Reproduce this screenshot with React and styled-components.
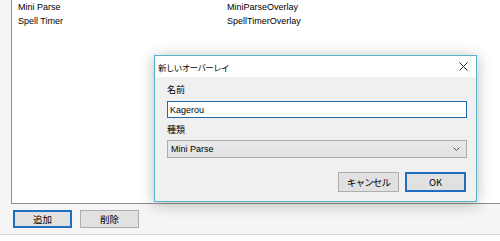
import styled, { createGlobalStyle } from 'styled-components';

const GlobalStyle = createGlobalStyle`
  html, body {
    margin: 0;
    padding: 0;
    background: #ffffff;
    overflow: hidden;
  }
  body {
    font-family: "Liberation Sans", "Noto Sans CJK JP", sans-serif;
    font-size: 9px;
    color: #000;
  }
`;

const Window = styled.div`
  position: relative;
  width: 500px;
  height: 241px;
  display: flex;
  flex-direction: column;
  background: #fff;
`;

const Form = styled.div`
  height: 234px;
  background: #f5f5f5;
  border-bottom: 1px solid #d6d6d6;
  display: flex;
  flex-direction: column;
`;

const ListBox = styled.div`
  margin: -1px 0 0 11px;
  height: 205px;
  background: #fff;
  border: 1px solid #8f8f8f;
  border-right: none;
  box-sizing: border-box;
  padding: 0 0 0 6px;
`;

const Row = styled.div`
  display: grid;
  grid-template-columns: 209px 1fr;
  height: 14px;
  line-height: 14px;
`;

const ButtonRow = styled.div`
  display: flex;
  gap: 8px;
  padding: 6px 0 0 13px;
`;

const Button = styled.button`
  box-sizing: border-box;
  width: ${p => p.$w || 59}px;
  height: ${p => p.$h || 18}px;
  padding: 0;
  margin: 0;
  background: #e1e1e1;
  border: ${p => (p.$primary ? '2px solid #1e6fbf' : '1px solid #adadad')};
  font-family: "Noto Sans CJK JP", "Liberation Sans", sans-serif;
  font-size: 9.5px;
  letter-spacing: ${p => p.$ls || 0}px;
  color: #000;
  display: flex;
  align-items: center;
  justify-content: center;
`;

const Dialog = styled.div`
  position: absolute;
  left: 154px;
  top: 55px;
  width: 323px;
  height: 147px;
  box-sizing: border-box;
  border: 1px solid #56b4c9;
  background: #f0f0f0;
  box-shadow: 0 2px 14px rgba(0, 0, 0, 0.28);
  display: flex;
  flex-direction: column;
`;

const TitleBar = styled.div`
  height: 21px;
  background: #fff;
  display: flex;
  align-items: center;
  justify-content: space-between;
  padding: 0 8px 0 3px;
`;

const Title = styled.span`
  font-family: "Noto Sans CJK JP", sans-serif;
  font-size: 8.5px;
  letter-spacing: -0.6px;
`;

const Body = styled.div`
  flex: 1;
  display: flex;
  flex-direction: column;
  padding: 0 9px 0 12px;
`;

const Label = styled.div`
  font-family: "Noto Sans CJK JP", sans-serif;
  font-size: 9px;
  height: 14px;
  line-height: 14px;
  margin-top: ${p => p.$mt}px;
`;

const Input = styled.div`
  box-sizing: border-box;
  margin-top: 4px;
  height: 17px;
  background: #fff;
  border: 1px solid #1f6aa6;
  padding-left: 2px;
  display: flex;
  align-items: center;
`;

const Select = styled.div`
  box-sizing: border-box;
  margin-top: 3px;
  height: 18px;
  background: linear-gradient(#e9e9e9, #e2e2e2);
  border: 1px solid #acacac;
  padding: 0 6px 0 3px;
  display: flex;
  align-items: center;
  justify-content: space-between;
`;

const DialogButtons = styled.div`
  margin-top: 14px;
  display: flex;
  justify-content: flex-end;
  gap: 6px;
  padding-right: 1px;
`;

const Chevron = () => (
  <svg width="7" height="4" viewBox="0 0 7 4">
    <path d="M0.5 0.5 L3.5 3.5 L6.5 0.5" fill="none" stroke="#555" strokeWidth="1" />
  </svg>
);

const CloseIcon = () => (
  <svg width="9" height="9" viewBox="0 0 9 9">
    <path d="M0.5 0.5 L8.5 8.5 M8.5 0.5 L0.5 8.5" stroke="#111" strokeWidth="0.9" />
  </svg>
);

const overlays = [
  ['Mini Parse', 'MiniParseOverlay'],
  ['Spell Timer', 'SpellTimerOverlay'],
];

export default function App() {
  return (
    <Window>
      <GlobalStyle />
      <Form>
        <ListBox>
          {overlays.map(([name, type]) => (
            <Row key={name}>
              <span>{name}</span>
              <span>{type}</span>
            </Row>
          ))}
        </ListBox>
        <ButtonRow>
          <Button $primary>追加</Button>
          <Button>削除</Button>
        </ButtonRow>
      </Form>

      <Dialog>
        <TitleBar>
          <Title>新しいオーバーレイ</Title>
          <CloseIcon />
        </TitleBar>
        <Body>
          <Label $mt={6}>名前</Label>
          <Input>Kagerou</Input>
          <Label $mt={5}>種類</Label>
          <Select>
            <span>Mini Parse</span>
            <Chevron />
          </Select>
          <DialogButtons>
            <Button $w={61} $h={20} $ls={-0.8}>キャンセル</Button>
            <Button $w={61} $h={20} $primary>OK</Button>
          </DialogButtons>
        </Body>
      </Dialog>
    </Window>
  );
}
